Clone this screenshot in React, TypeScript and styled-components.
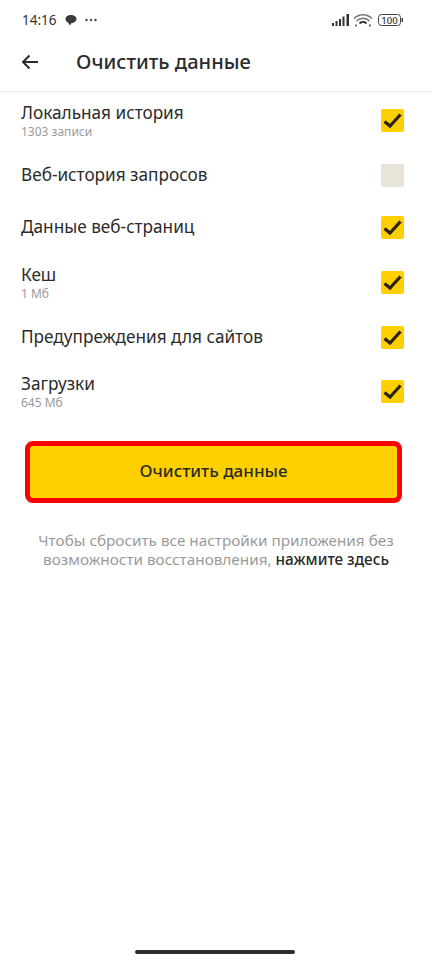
import React from 'react';
import styled, { createGlobalStyle } from 'styled-components';

const GlobalStyle = createGlobalStyle`
  html, body {
    margin: 0;
    padding: 0;
    background: #fff;
  }
  * {
    box-sizing: border-box;
  }
`;

const Page = styled.div`
  width: 432px;
  height: 960px;
  display: flex;
  flex-direction: column;
  background: #fff;
  font-family: "Noto Sans", "Open Sans", sans-serif;
  color: #2b2b2b;
  overflow: hidden;
`;

const StatusBar = styled.div`
  height: 40px;
  padding: 0 29px 0 22px;
  display: flex;
  align-items: center;
  justify-content: space-between;
`;

const StatusGroup = styled.div`
  display: flex;
  align-items: center;
  gap: 8px;
`;

const Time = styled.span`
  font-size: 13.5px;
  color: #333;
`;

const Header = styled.header`
  height: 52px;
  display: flex;
  align-items: center;
  padding: 0 20px 8px;
  gap: 36px;
  border-bottom: 1px solid #ececec;
  box-shadow: 0 1px 2px rgba(0, 0, 0, 0.05);
`;

const BackButton = styled.button`
  width: 20px;
  height: 20px;
  padding: 0;
  border: 0;
  background: none;
  display: flex;
`;

const Title = styled.h1`
  margin: 0;
  font-size: 20.1px;
  font-weight: 500;
  color: #2b2b2b;
`;

const List = styled.div`
  margin-top: -1px;
  display: flex;
  flex-direction: column;
`;

const Row = styled.div<{ $tall?: boolean }>`
  height: ${(p) => (p.$tall ? 58 : 52)}px;
  padding: 0 28px 0 21px;
  display: flex;
  align-items: center;
  justify-content: space-between;

  &:last-child {
    height: 56px;
  }
`;

const Labels = styled.div`
  display: flex;
  flex-direction: column;
`;

const Label = styled.span`
  font-size: 17.2px;
  line-height: 22px;
  color: #2b2b2b;
`;

const Sub = styled.span`
  font-size: 12px;
  line-height: 15px;
  color: #9a9a9a;
`;

const Box = styled.span<{ $on: boolean }>`
  width: 23px;
  height: 23px;
  border-radius: 2px;
  background: ${(p) => (p.$on ? '#ffd000' : '#e8e5d8')};
  display: flex;
  align-items: center;
  justify-content: center;
`;

const ActionWrap = styled.div`
  padding: 22px 30px 0 25px;
`;

const ClearButton = styled.button`
  width: 100%;
  height: 62px;
  padding: 0 0 3px;
  border: 5px solid #fe0000;
  border-radius: 8px;
  background: #ffd000;
  font-family: inherit;
  font-size: 17px;
  font-weight: 500;
  color: #2b2b2b;
`;

const Note = styled.p`
  margin: 28px 0 0;
  padding: 0 30px;
  text-align: center;
  font-size: 15.3px;
  line-height: 19px;
  color: #9a9a9a;
`;

const NoteLink = styled.span`
  color: #2b2b2b;
  font-weight: 500;
`;

const HomeIndicator = styled.div`
  margin: auto 0 6px 135px;
  width: 160px;
  height: 4px;
  border-radius: 2px;
  background: #2e2e2e;
`;

const Check = () => (
  <svg width="19" height="17" viewBox="0 0 19 17" fill="none">
    <path d="M1.500 9.500 L7 14 L17.500 2.500" stroke="#2b2410" strokeWidth="3.200" />
  </svg>
);

const items = [
  { label: 'Локальная история', sub: '1303 записи', on: true },
  { label: 'Веб-история запросов', on: false },
  { label: 'Данные веб-страниц', on: true },
  { label: 'Кеш', sub: '1 Мб', on: true },
  { label: 'Предупреждения для сайтов', on: true },
  { label: 'Загрузки', sub: '645 Мб', on: true },
];

const App = () => {
  return (
    <Page>
      <GlobalStyle />
      <StatusBar>
        <StatusGroup>
          <Time>14:16</Time>
          <svg width="12" height="12" viewBox="0 0 12 12">
            <path d="M6 1C3 1 .5 2.600.5 5c0 1.600 1 2.800 2.500 3.500L5 11.500 6.500 9C9.200 9 11.500 7.300 11.500 5c0-2.400-2.500-4-5.500-4z" fill="#3a3a3a" />
          </svg>
          <svg width="12" height="4" viewBox="0 0 12 4">
            <circle cx="1.500" cy="2" r="1.200" fill="#444" />
            <circle cx="6" cy="2" r="1.200" fill="#444" />
            <circle cx="10.500" cy="2" r="1.200" fill="#444" />
          </svg>
        </StatusGroup>
        <svg width="71" height="14" viewBox="0 0 71 14" fill="none">
          <rect x="0" y="10" width="2" height="3" fill="#333" />
          <rect x="3.500" y="8" width="2" height="5" fill="#333" />
          <rect x="7" y="6" width="2" height="7" fill="#333" />
          <rect x="10.500" y="3.500" width="2" height="9.500" fill="#333" />
          <rect x="14.500" y="1" width="2.500" height="12" fill="#333" />
          <path d="M22 5.500a12.500 12.500 0 0 1 18 0M24.500 8a9 9 0 0 1 13 0" stroke="#777" strokeWidth="1.500" />
          <path d="M27.500 10.500a5 5 0 0 1 7 0" stroke="#222" strokeWidth="2" />
          <circle cx="24" cy="12.500" r="1" fill="#444" />
          <circle cx="38" cy="12.500" r="1" fill="#444" />
          <rect x="46.500" y="1.500" width="22" height="11" rx="3" stroke="#444" />
          <rect x="69.500" y="5" width="1.500" height="4" fill="#444" />
          <text x="57.500" y="10.500" textAnchor="middle" fontSize="9.500" fontWeight="500" fill="#333" fontFamily="Noto Sans">100</text>
        </svg>
      </StatusBar>
      <Header>
        <BackButton>
          <svg width="20" height="20" viewBox="0 0 20 20" fill="none">
            <path d="M18 10H3M9.500 3.500 3 10l6.500 6.500" stroke="#2b2b2b" strokeWidth="2" />
          </svg>
        </BackButton>
        <Title>Очистить данные</Title>
      </Header>
      <List>
        {items.map((item) => (
          <Row key={item.label} $tall={!!item.sub}>
            <Labels>
              <Label>{item.label}</Label>
              {item.sub && <Sub>{item.sub}</Sub>}
            </Labels>
            <Box $on={item.on}>{item.on && <Check />}</Box>
          </Row>
        ))}
      </List>
      <ActionWrap>
        <ClearButton>Очистить данные</ClearButton>
      </ActionWrap>
      <Note>
        Чтобы сбросить все настройки приложения без возможности восстановления, <NoteLink>нажмите здесь</NoteLink>
      </Note>
      <HomeIndicator />
    </Page>
  );
};

export default App;
